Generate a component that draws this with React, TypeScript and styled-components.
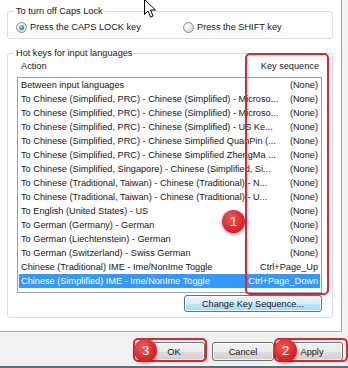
import styled, { createGlobalStyle } from "styled-components";

const GlobalStyle = createGlobalStyle`
  html, body {
    margin: 0;
    padding: 0;
  }
  body {
    background: #f0f0f0;
    font-family: "Liberation Sans", Arial, sans-serif;
    font-size: 9.2px;
    color: #151515;
  }
`;

const Window = styled.div`
  position: relative;
  width: 348px;
  height: 368px;
  box-sizing: border-box;
  overflow: hidden;
  display: flex;
  flex-direction: column;
  background: #f0f0f0;
  border-bottom: 2px solid #5d6d7e;
`;

const TabPage = styled.div`
  width: 342px;
  height: 332px;
  box-sizing: border-box;
  background: #fff;
  border-right: 1px solid #a9adb3;
  border-bottom: 1px solid #a9adb3;
  padding: 5px 0 0 7px;
`;

const Group = styled.fieldset<{ $gap?: number }>`
  width: 326px;
  box-sizing: border-box;
  margin: ${(p) => p.$gap || 0}px 0 0 0;
  padding: 0;
  min-inline-size: 0;
  border: 1px solid #d5dfe5;
  border-radius: 3px;
`;

const Legend = styled.legend`
  margin-left: 6px;
  padding: 0 2px;
  line-height: 12px;
  color: #151515;
`;

const RadioRow = styled.div`
  display: grid;
  grid-template-columns: 167px auto;
  padding: 4px 0 5px 8px;
  line-height: 12px;
`;

const RadioLabel = styled.label`
  display: flex;
  align-items: center;
  gap: 3px;
`;

const RadioCircle = styled.span<{ $checked?: boolean }>`
  position: relative;
  width: 11px;
  height: 11px;
  box-sizing: border-box;
  border-radius: 50%;
  border: 1px solid #8b8e92;
  background: radial-gradient(circle at 35% 30%, #ffffff, #e4e4e4 55%, #c9c9c9);

  &::after {
    content: "";
    display: ${(p) => (p.$checked ? "block" : "none")};
    position: absolute;
    left: 2px;
    top: 2px;
    width: 5px;
    height: 5px;
    border-radius: 50%;
    background: radial-gradient(circle at 40% 35%, #a6e1ff, #2f8fd4 55%, #1b4f82);
  }
`;

const HotKeys = styled.div`
  padding: 0 10px 5px 9px;
`;

const Header = styled.div`
  display: flex;
  justify-content: space-between;
  padding: 1px 3px 5px 4px;
  line-height: 12px;
`;

const ListBox = styled.div`
  width: 305px;
  box-sizing: border-box;
  border: 1px solid #9c9fa5;
  padding: 0 1px 4px 1px;
`;

const Row = styled.div<{ $selected?: boolean }>`
  display: flex;
  height: 14px;
  line-height: 14px;
  padding: 0 2px;
  white-space: nowrap;
  background: ${(p) => (p.$selected ? "#3399ff" : "transparent")};
  color: ${(p) => (p.$selected ? "#fff" : "#151515")};
`;

const ActionCell = styled.span`
  flex: 1;
  overflow: hidden;
`;

const KeyCell = styled.span`
  flex: none;
  padding-left: 6px;
  text-align: right;
`;

const ChangeRow = styled.div`
  display: flex;
  justify-content: flex-end;
  padding-top: 2px;
`;

const Button = styled.button<{ $hot?: boolean; $width: number }>`
  width: ${(p) => p.$width}px;
  height: ${(p) => (p.$hot ? 17 : 19)}px;
  box-sizing: border-box;
  padding: 0;
  font-family: inherit;
  font-size: 9.2px;
  color: #151515;
  border-radius: 3px;
  border: 1px solid ${(p) => (p.$hot ? "#3c7fb1" : "#707070")};
  box-shadow: inset 0 0 0 1px rgba(255, 255, 255, 0.75);
  background: ${(p) =>
    p.$hot
      ? "linear-gradient(#eaf6fd 0%, #d9f0fc 50%, #bee6fd 51%, #a7d9f5 100%)"
      : "linear-gradient(#f2f2f2 0%, #ebebeb 50%, #dddddd 51%, #cfcfcf 100%)"};
`;

const ButtonBar = styled.div`
  flex: 1;
  display: flex;
  justify-content: flex-end;
  align-items: flex-start;
  gap: 7px;
  padding: 10px 5px 0 0;
`;

const Marker = styled.div<{ $x: number; $y: number; $w: number; $h: number }>`
  position: absolute;
  left: ${(p) => p.$x}px;
  top: ${(p) => p.$y}px;
  width: ${(p) => p.$w}px;
  height: ${(p) => p.$h}px;
  box-sizing: border-box;
  border: 2px solid #e2252c;
  border-radius: 5px;
  pointer-events: none;
`;

const Badge = styled.div<{ $x: number; $y: number }>`
  position: absolute;
  left: ${(p) => p.$x}px;
  top: ${(p) => p.$y}px;
  width: 23px;
  height: 23px;
  border-radius: 50%;
  display: grid;
  place-items: center;
  font-size: 13px;
  color: #fff;
  background: radial-gradient(circle at 40% 35%, #f25a57, #d9262c 60%, #b81b21);
  box-shadow: 0 1px 3px rgba(0, 0, 0, 0.45);
`;

const Cursor = styled.svg`
  position: absolute;
  left: 144px;
  top: -1px;
`;

const rows: [string, string][] = [
  ["Between input languages", "(None)"],
  ["To Chinese (Simplified, PRC) - Chinese (Simplified) - Microso...", "(None)"],
  ["To Chinese (Simplified, PRC) - Chinese (Simplified) - Microso...", "(None)"],
  ["To Chinese (Simplified, PRC) - Chinese (Simplified) - US Ke...", "(None)"],
  ["To Chinese (Simplified, PRC) - Chinese Simplified QuanPin (...", "(None)"],
  ["To Chinese (Simplified, PRC) - Chinese Simplified ZhengMa ...", "(None)"],
  ["To Chinese (Simplified, Singapore) - Chinese (Simplified, Si...", "(None)"],
  ["To Chinese (Traditional, Taiwan) - Chinese (Traditional) - N...", "(None)"],
  ["To Chinese (Traditional, Taiwan) - Chinese (Traditional) - U...", "(None)"],
  ["To English (United States) - US", "(None)"],
  ["To German (Germany) - German", "(None)"],
  ["To German (Liechtenstein) - German", "(None)"],
  ["To German (Switzerland) - Swiss German", "(None)"],
  ["Chinese (Traditional) IME - Ime/NonIme Toggle", "Ctrl+Page_Up"],
  ["Chinese (Simplified) IME - Ime/NonIme Toggle", "Ctrl+Page_Down"],
];

function App() {
  return (
    <Window>
      <GlobalStyle />
      <TabPage>
        <Group>
          <Legend>To turn off Caps Lock</Legend>
          <RadioRow>
            <RadioLabel>
              <RadioCircle $checked />
              Press the CAPS LOCK key
            </RadioLabel>
            <RadioLabel>
              <RadioCircle />
              Press the SHIFT key
            </RadioLabel>
          </RadioRow>
        </Group>
        <Group $gap={8}>
          <Legend>Hot keys for input languages</Legend>
          <HotKeys>
            <Header>
              <span>Action</span>
              <span>Key sequence</span>
            </Header>
            <ListBox>
              {rows.map(([action, keys], i) => (
                <Row key={i} $selected={i === rows.length - 1}>
                  <ActionCell>{action}</ActionCell>
                  <KeyCell>{keys}</KeyCell>
                </Row>
              ))}
            </ListBox>
            <ChangeRow>
              <Button $hot $width={138}>
                Change Key Sequence...
              </Button>
            </ChangeRow>
          </HotKeys>
        </Group>
      </TabPage>
      <ButtonBar>
        <Button $width={62}>OK</Button>
        <Button $width={62}>Cancel</Button>
        <Button $width={62}>Apply</Button>
      </ButtonBar>

      <Marker $x={245} $y={53} $w={84} $h={242} />
      <Marker $x={133} $y={338} $w={74} $h={24} />
      <Marker $x={274} $y={338} $w={74} $h={24} />
      <Badge $x={222} $y={210}>1</Badge>
      <Badge $x={274} $y={339}>2</Badge>
      <Badge $x={134} $y={339}>3</Badge>

      <Cursor width="13" height="20" viewBox="0 0 13 20">
        <path
          d="M0.5 0.5 L0.5 15.5 L4 12 L6.5 18 L9 17 L6.5 11 L11.5 11 Z"
          fill="#fff"
          stroke="#000"
          strokeWidth="1"
          strokeLinejoin="miter"
        />
      </Cursor>
    </Window>
  );
}

export default App;
